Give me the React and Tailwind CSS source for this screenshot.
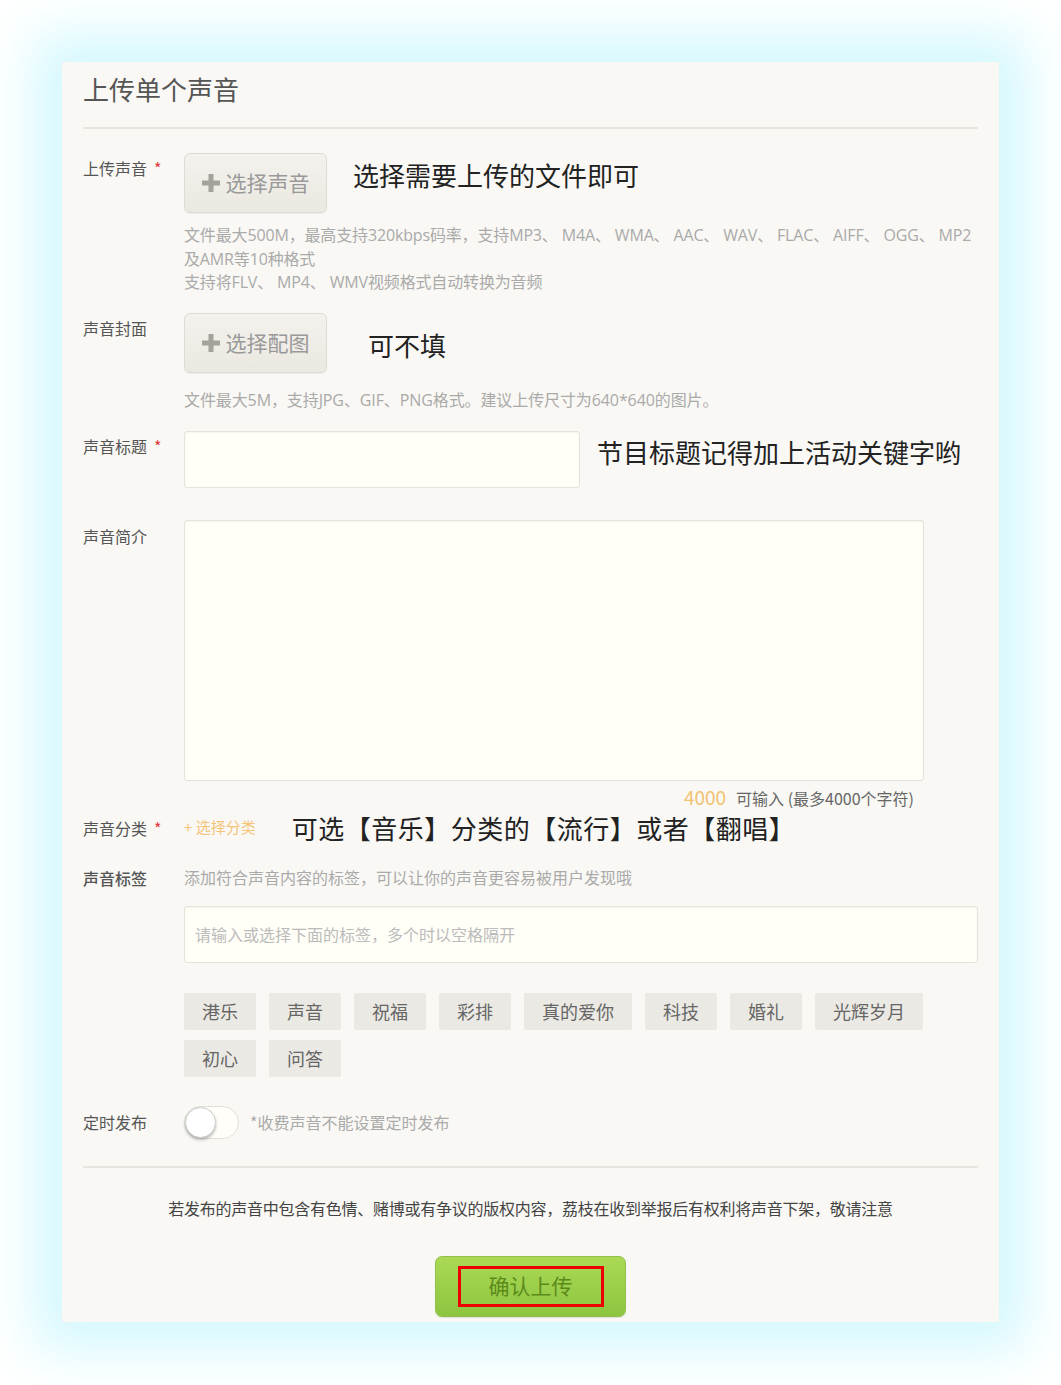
import React, { useState } from "react";

const tags = ["港乐", "声音", "祝福", "彩排", "真的爱你", "科技", "婚礼", "光辉岁月", "初心", "问答"];

const Label = ({ text, required, className = "" }) => (
  <div className={`w-[101px] shrink-0 text-[16px] leading-[20px] text-[#555] ${className}`}>
    {text}
    {required && <span className="ml-[7px] text-[#e4393c]">*</span>}
  </div>
);

const PickButton = ({ text }) => (
  <button className="flex h-[60px] w-[143px] shrink-0 items-center justify-center gap-[6px] rounded-[6px] border border-[#dedbd3] bg-gradient-to-b from-[#f4f2ed] to-[#ebe8e1] text-[21px] text-[#999] shadow-[0_1px_1px_rgba(0,0,0,0.06)]">
    <svg width="18" height="18" viewBox="0 0 18 18" className="shrink-0">
      <rect x="6.5" y="0" width="5" height="18" fill="#a5a19b" />
      <rect x="0" y="6.5" width="18" height="5" fill="#a5a19b" />
    </svg>
    {text}
  </button>
);

const App = () => {
  const [scheduled, setScheduled] = useState(false);

  return (
    <div className="min-h-[1385px] bg-white p-[62px] font-['Noto_Sans_CJK_SC',sans-serif]">
      <div className="bg-[#f9f8f4] px-[21px] pb-[5px] pt-[12px] shadow-[0_0_50px_28px_#d4f8fe]">
        {/* 标题 */}
        <h1 className="text-[26px] leading-[30px] text-[#555]">上传单个声音</h1>
        <div className="mt-[23px] border-t-2 border-[#e8e6e0]" />

        {/* 上传声音 */}
        <div className="mt-[24px] flex">
          <Label text="上传声音" required className="pt-[5px]" />
          <div className="flex-1">
            <div className="flex">
              <PickButton text="选择声音" />
              <span className="ml-[26px] mt-[5px] text-[26px] leading-[34px] text-[#222]">
                选择需要上传的文件即可
              </span>
            </div>
            <p className="mt-[11px] font-['Open_Sans','Noto_Sans_CJK_SC',sans-serif] text-[16px] leading-[23.5px] tracking-[-0.15px] text-[#aaa]">
              文件最大500M，最高支持320kbps码率，支持MP3、 M4A、 WMA、 AAC、 WAV、 FLAC、 AIFF、 OGG、 MP2
              <br />
              及AMR等10种格式
              <br />
              支持将FLV、 MP4、 WMV视频格式自动转换为音频
            </p>
          </div>
        </div>

        {/* 声音封面 */}
        <div className="mt-[18px] flex">
          <Label text="声音封面" className="pt-[5px]" />
          <div className="flex-1">
            <div className="flex">
              <PickButton text="选择配图" />
              <span className="ml-[41px] mt-[15px] text-[26px] leading-[34px] text-[#222]">可不填</span>
            </div>
            <p className="mt-[16px] font-['Open_Sans','Noto_Sans_CJK_SC',sans-serif] text-[16px] leading-[23px] tracking-[-0.1px] text-[#aaa]">
              文件最大5M，支持JPG、GIF、PNG格式。建议上传尺寸为640*640的图片。
            </p>
          </div>
        </div>

        {/* 声音标题 */}
        <div className="mt-[19px] flex">
          <Label text="声音标题" required className="pt-[5px]" />
          <input className="h-[57px] w-[396px] rounded-[3px] border border-[#e6e3dc] bg-[#fffef7] shadow-[inset_0_1px_2px_rgba(0,0,0,0.05)] outline-none" />
          <span className="ml-[17px] mt-[4px] text-[26px] leading-[34px] text-[#222]">
            节目标题记得加上活动关键字哟
          </span>
        </div>

        {/* 声音简介 */}
        <div className="mt-[32px] flex">
          <Label text="声音简介" className="pt-[6px]" />
          <div className="w-[740px]">
            <textarea className="block h-[261px] w-full resize-none rounded-[3px] border border-[#e6e3dc] bg-[#fffef7] shadow-[inset_0_1px_2px_rgba(0,0,0,0.05)] outline-none" />
            <div className="mt-[5px] flex items-baseline justify-end gap-[10px] pr-[10px]">
              <span className="text-[19px] leading-[22px] text-[#f2c272]">4000</span>
              <span className="text-[16px] leading-[22px] text-[#666]">可输入 (最多4000个字符)</span>
            </div>
          </div>
        </div>

        {/* 声音分类 */}
        <div className="mt-[3px] flex h-[32px] items-center">
          <Label text="声音分类" required />
          <span className="text-[15px] text-[#f5c47a]">+ 选择分类</span>
          <span className="ml-[36px] text-[26px] leading-[32px] tracking-[0.5px] text-[#222]">
            可选【音乐】分类的【流行】或者【翻唱】
          </span>
        </div>

        {/* 声音标签 */}
        <div className="mt-[23px] flex">
          <Label text="声音标签" className="pt-[1px] font-medium" />
          <div className="flex-1">
            <p className="text-[16px] leading-[20px] text-[#aaa]">
              添加符合声音内容的标签，可以让你的声音更容易被用户发现哦
            </p>
            <input
              placeholder="请输入或选择下面的标签，多个时以空格隔开"
              className="mt-[19px] h-[57px] w-full rounded-[3px] border border-[#e6e3dc] bg-[#fffef7] px-[10px] text-[16px] shadow-[inset_0_1px_2px_rgba(0,0,0,0.05)] outline-none placeholder:text-[#bbb]"
            />
            <div className="mt-[30px] flex w-[760px] flex-wrap gap-x-[13px] gap-y-[10px]">
              {tags.map((t) => (
                <span
                  key={t}
                  className="flex h-[37px] items-center rounded-[2px] bg-[#ebe9e3] px-[18px] text-[18px] text-[#666]"
                >
                  {t}
                </span>
              ))}
            </div>
          </div>
        </div>

        {/* 定时发布 */}
        <div className="mt-[29px] flex items-center">
          <Label text="定时发布" />
          <button
            onClick={() => setScheduled(!scheduled)}
            className="relative h-[33px] w-[55px] rounded-full border border-[#e2dfd8] bg-[#fffef9]"
          >
            <span className="absolute left-0 top-0 h-[31px] w-[31px] rounded-full border border-[#ccc] bg-white shadow-[0_2px_3px_rgba(0,0,0,0.25)]" />
          </button>
          <span className="ml-[11px] text-[16px] text-[#aaa]">*收费声音不能设置定时发布</span>
        </div>

        <div className="mt-[27px] border-t-2 border-[#e8e6e0]" />

        <p className="mt-[30px] text-center text-[16px] leading-[20px] tracking-[-0.25px] text-[#444]">
          若发布的声音中包含有色情、赌博或有争议的版权内容，荔枝在收到举报后有权利将声音下架，敬请注意
        </p>

        <div className="mt-[38px] flex justify-center">
          <button className="flex h-[61px] w-[191px] items-center justify-center rounded-[7px] border border-[#90c24a] bg-gradient-to-b from-[#abd955] to-[#8dc540] shadow-[0_1px_1px_rgba(0,0,0,0.1)]">
            <span className="flex h-[41px] w-[146px] items-center justify-center border-[3px] border-[#ee0000] text-[21px] text-[#5a8a1a]">
              确认上传
            </span>
          </button>
        </div>
      </div>
    </div>
  );
};

export default App;
